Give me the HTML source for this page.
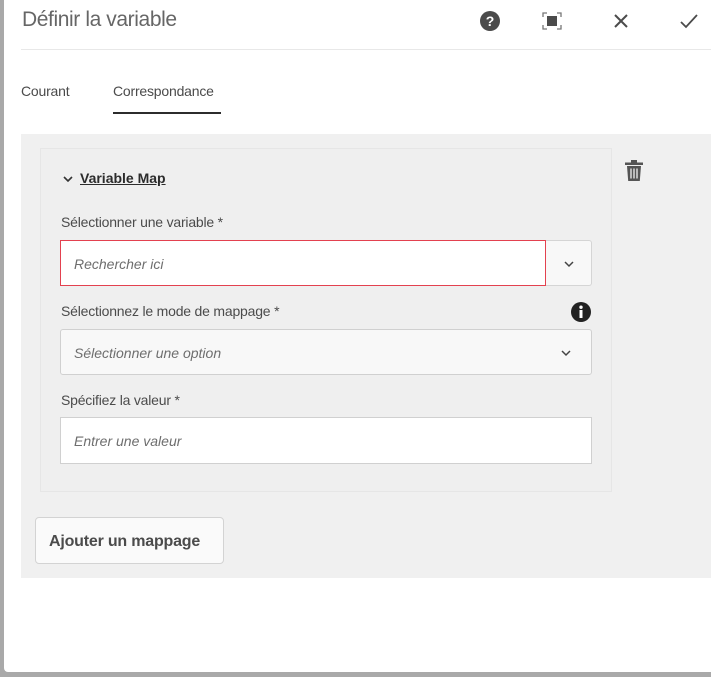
<!DOCTYPE html>
<html><head><meta charset="utf-8"><style>
body{margin:0;width:711px;height:677px;background:#a9a9a9;font-family:"Liberation Sans",sans-serif;overflow:hidden;position:relative}
.panel{position:absolute;left:4px;top:0;width:707px;height:672px;background:#fff;border-bottom-left-radius:4px}
.title{position:absolute;left:18px;top:8px;font-size:21px;color:#666;letter-spacing:-0.4px}
.hr{position:absolute;left:17px;right:0;top:49px;height:1px;background:#e8e8e8}
.tab{position:absolute;top:83px;font-size:14px;color:#4b4b4b;letter-spacing:-0.2px}
.ul{position:absolute;left:109px;top:112px;width:108px;height:2px;background:#2c2c2c}
.gray{position:absolute;left:17px;top:134px;width:690px;height:444px;background:#f0f0f0}
.card{position:absolute;left:19px;top:14px;width:570px;height:342px;border:1px solid #e6e6e6;background:#efefef}
.lbl{position:absolute;left:20px;font-size:14px;color:#4b4b4b;letter-spacing:-0.2px}
.inp{position:absolute;left:19px;width:530px;height:45px;background:#fff;border:1px solid #d0d0d0;border-radius:3px;box-sizing:border-box;font-style:italic;font-size:14px;color:#6e6e6e;padding:15px 0 0 13px}
.btn{position:absolute;left:14px;top:383px;width:189px;height:47px;border:1px solid #d3d3d3;border-radius:4px;background:#fafafa;box-sizing:border-box;font-size:16px;font-weight:bold;color:#4b4b4b;padding:15px 0 0 13px;letter-spacing:-0.2px}
</style></head><body>
<div class="panel">
<div class="title">Définir la variable</div>
<svg style="position:absolute;left:476px;top:11px" width="20" height="20" viewBox="0 0 20 20"><circle cx="10" cy="10" r="10" fill="#4b4b4b"/><text x="10" y="15" font-size="14" font-weight="bold" fill="#fff" text-anchor="middle" font-family="Liberation Sans">?</text></svg>
<svg style="position:absolute;left:538px;top:12px" width="20" height="18" viewBox="0 0 20 18"><path d="M1 5V1h4M15 1h4v4M19 13v4h-4M5 17H1v-4" fill="none" stroke="#777" stroke-width="1.3"/><rect x="5" y="4" width="10" height="10" fill="#4b4b4b"/></svg>
<svg style="position:absolute;left:609px;top:13px" width="16" height="16" viewBox="0 0 16 16"><path d="M2 2L14 14M14 2L2 14" stroke="#4b4b4b" stroke-width="2"/></svg>
<svg style="position:absolute;left:676px;top:13px" width="18" height="16" viewBox="0 0 18 16"><path d="M1 9l5 5L17 2" fill="none" stroke="#4b4b4b" stroke-width="1.8"/></svg>
<div class="hr"></div>
<div class="tab" style="left:17px">Courant</div>
<div class="tab" style="left:109px">Correspondance</div>
<div class="ul"></div>
<div class="gray">
 <div class="card">
  <svg style="position:absolute;left:22px;top:26px" width="10" height="8" viewBox="0 0 10 8"><path d="M1 2l4 4 4-4" fill="none" stroke="#333" stroke-width="1.6"/></svg>
  <div style="position:absolute;left:39px;top:21px;font-size:14px;font-weight:bold;color:#2c2c2c;text-decoration:underline">Variable Map</div>
  <div class="lbl" style="top:65px">Sélectionner une variable *</div>
  <div class="inp" style="top:91px;width:486px;height:46px;border:1px solid #e3414f;border-radius:0">Rechercher ici</div>
  <div style="position:absolute;left:505px;top:91px;width:46px;height:46px;border:1px solid #d5d5d5;border-left:none;background:#f8f8f8;box-sizing:border-box;border-radius:0 3px 3px 0"><svg style="position:absolute;left:18px;top:19px" width="10" height="8" viewBox="0 0 10 8"><path d="M1 2l4 4 4-4" fill="none" stroke="#444" stroke-width="1.5"/></svg></div>
  <div class="lbl" style="top:154px">Sélectionnez le mode de mappage *</div>
  <svg style="position:absolute;left:530px;top:153px" width="20" height="20" viewBox="0 0 20 20"><circle cx="10" cy="10" r="10" fill="#222"/><rect x="8.5" y="8" width="3" height="8" fill="#fff"/><circle cx="10" cy="5.2" r="1.7" fill="#fff"/></svg>
  <div class="inp" style="top:180px;width:532px;height:46px;background:#f8f8f8">Sélectionner une option<svg style="position:absolute;left:500px;top:19px" width="10" height="8" viewBox="0 0 10 8"><path d="M1 2l4 4 4-4" fill="none" stroke="#444" stroke-width="1.5"/></svg></div>
  <div class="lbl" style="top:243px">Spécifiez la valeur *</div>
  <div class="inp" style="top:268px;width:532px;height:47px;border-radius:0">Entrer une valeur</div>
 </div>
 <svg style="position:absolute;left:604px;top:26px" width="18" height="22" viewBox="0 0 18 22"><rect x="0" y="2.5" width="18" height="2.5" fill="#555"/><rect x="6" y="0" width="6" height="3" fill="#555"/><path d="M2 6h14l-1.2 15H3.2z" fill="#555"/><path d="M6 8.5v10M9 8.5v10M12 8.5v10" stroke="#f0f0f0" stroke-width="1.3"/></svg>
 <div class="btn">Ajouter un mappage</div>
</div>
</div>
</body></html>
